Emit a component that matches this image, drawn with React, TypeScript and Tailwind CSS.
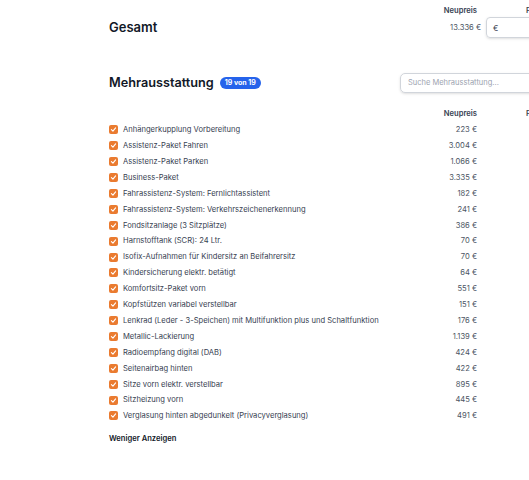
import * as React from 'react';

const items: [string, string][] = [
    ['Anhängerkupplung Vorbereitung', '223 €'],
    ['Assistenz-Paket Fahren', '3.004 €'],
    ['Assistenz-Paket Parken', '1.066 €'],
    ['Business-Paket', '3.335 €'],
    ['Fahrassistenz-System: Fernlichtassistent', '182 €'],
    ['Fahrassistenz-System: Verkehrszeichenerkennung', '241 €'],
    ['Fondsitzanlage (3 Sitzplätze)', '386 €'],
    ['Harnstofftank (SCR): 24 Ltr.', '70 €'],
    ['Isofix-Aufnahmen für Kindersitz an Beifahrersitz', '70 €'],
    ['Kindersicherung elektr. betätigt', '64 €'],
    ['Komfortsitz-Paket vorn', '551 €'],
    ['Kopfstützen variabel verstellbar', '151 €'],
    ['Lenkrad (Leder - 3-Speichen) mit Multifunktion plus und Schaltfunktion', '176 €'],
    ['Metallic-Lackierung', '1.139 €'],
    ['Radioempfang digital (DAB)', '424 €'],
    ['Seitenairbag hinten', '422 €'],
    ['Sitze vorn elektr. verstellbar', '895 €'],
    ['Sitzheizung vorn', '445 €'],
    ['Verglasung hinten abgedunkelt (Privacyverglasung)', '491 €'],
];

function Check() {
    return (
        <span className="flex h-[9px] w-[9px] shrink-0 items-center justify-center rounded-[2px] bg-[#ea7b30]">
            <svg viewBox="0 0 10 10" className="h-[7px] w-[7px]">
                <path d="M2 5.2 L4.2 7.3 L8 2.8" fill="none" stroke="white" strokeWidth="1.6" strokeLinecap="round" strokeLinejoin="round" />
            </svg>
        </span>
    );
}

export default function App() {
    return (
        <div className="h-[480px] w-[529px] overflow-hidden bg-white font-['Inter',sans-serif] text-[#1f2937]">
            <div className="ml-[109px] w-[517px]">
                {/* Gesamt */}
                <div className="flex h-[16px] items-end text-[7.6px] font-semibold text-[#374151]">
                    <div className="flex-1" />
                    <div className="w-[60px] text-right">Neupreis</div>
                    <div className="w-[49px]" />
                    <div className="w-[100px]">Firmenpreis</div>
                </div>
                <div className="mt-[1px] flex h-[21px] items-center">
                    <div className="flex-1 text-[13px] font-semibold text-[#111827]">Gesamt</div>
                    <div className="w-[60px] text-right text-[7.6px] text-[#4b5563]">13.336 €</div>
                    <div className="ml-[5px] flex h-[21px] w-[140px] items-center rounded-[4px] border border-[#d1d5db] pl-[6px] text-[8px] text-[#374151] shadow-sm">€</div>
                </div>

                {/* Mehrausstattung */}
                <div className="mt-[35px] flex h-[20px] items-center">
                    <div className="flex flex-1 items-center">
                        <span className="text-[12.7px] font-semibold text-[#111827]">Mehrausstattung</span>
                        <span className="ml-[6px] rounded-full bg-[#2563eb] px-[5px] py-[1px] text-[7px] leading-[10px] font-bold text-white">19 von 19</span>
                    </div>
                    <div className="flex h-[20px] w-[160px] items-center rounded-[5px] border border-[#d1d5db] pl-[7px] text-[7.5px] text-[#9ca3af] shadow-sm">
                        Suche Mehrausstattung...
                    </div>
                    <div className="w-[66px]" />
                </div>

                <div className="mt-[15px] flex h-[12px] items-center text-[7.6px] font-semibold text-[#374151]">
                    <div className="flex-1" />
                    <div className="w-[60px] text-right">Neupreis</div>
                    <div className="w-[49px]" />
                    <div className="w-[100px]">Firmenpreis</div>
                </div>

                <div className="mt-[2px] flex flex-col">
                    {items.map(([name, price]) => (
                        <div key={name} className="flex h-[15.9px] items-center text-[7.6px] text-[#374151]">
                            <Check />
                            <span className="ml-[5px] flex-1 whitespace-nowrap">{name}</span>
                            <span className="w-[60px] text-right text-[#4b5563]">{price}</span>
                            <div className="w-[149px]" />
                        </div>
                    ))}
                </div>

                <div className="mt-[9px] text-[7.6px] font-semibold text-[#111827]">Weniger Anzeigen</div>
            </div>
        </div>
    );
}
